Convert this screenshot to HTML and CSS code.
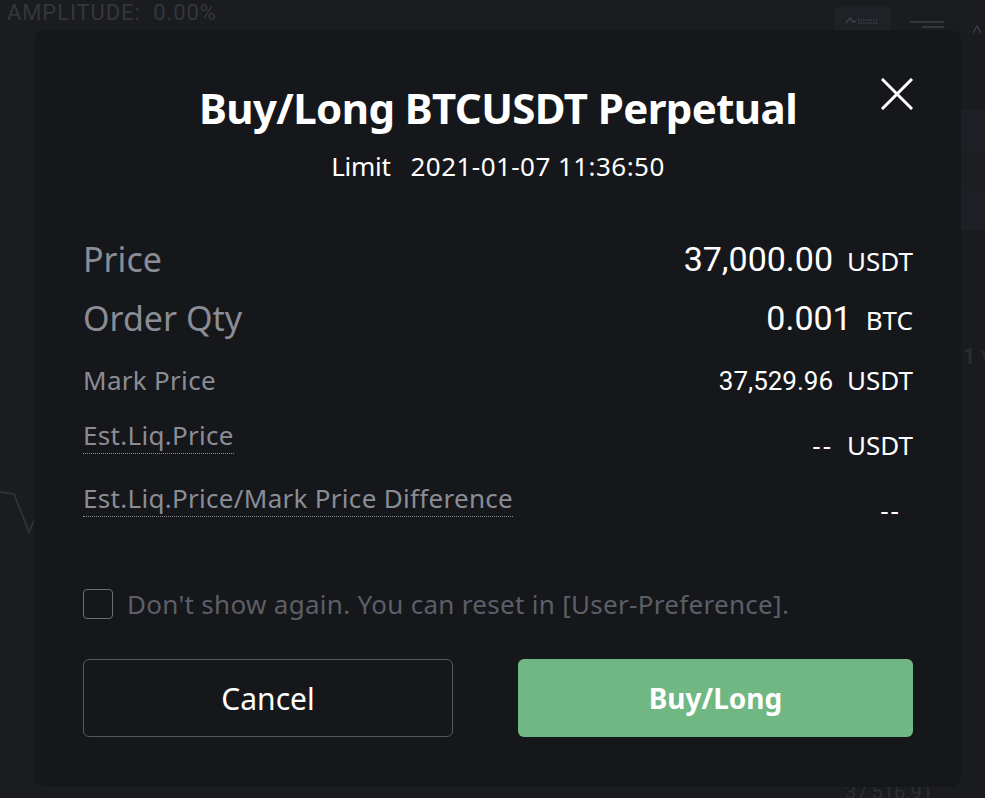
FILE: index.html
```html
<!DOCTYPE html>
<html lang="en">
<head>
<meta charset="utf-8">
<title>Buy/Long BTCUSDT Perpetual</title>
<link rel="stylesheet" href="styles.css">
</head>
<body>
<div class="app">
  <div class="amplitude">AMPLITUDE:&nbsp; 0.00%</div>
  <div class="tool-btn">
    <svg width="40" height="10" viewBox="0 0 40 10"><path d="M3 8 L7 3 L10 7 L13 6" fill="none" stroke="#3c3e44" stroke-width="1.5"/><path d="M15 5 H34 M15 8 H34" stroke="#3c3e44" stroke-width="1.5" stroke-dasharray="1.5 1"/></svg>
  </div>
  <div class="tool-lines"><span></span><span></span></div>
  <div class="tool-peak">
    <svg width="12" height="12" viewBox="0 0 12 12"><path d="M1 10 L5 3 L9 10" fill="none" stroke="#3c3e44" stroke-width="1.5"/></svg>
  </div>
  <div class="side-strip">
    <div class="band b1"></div>
    <div class="band b2"></div>
    <div class="band b3"></div>
    <div class="side-num">1 ˅</div>
  </div>
  <svg class="chart-line" width="40" height="60" viewBox="0 0 40 60"><path d="M0 8 L14 10 L29 48 L36 32" fill="none" stroke="#34363c" stroke-width="1.5"/></svg>
  <div class="bottom-text">37,516.91</div>

  <div class="modal">
    <button class="close" aria-label="Close">
      <svg width="32" height="32" viewBox="0 0 32 32"><path d="M2 2 L30 30 M30 2 L2 30" stroke="#ffffff" stroke-width="3" stroke-linecap="square"/></svg>
    </button>
    <h1 class="title">Buy/Long BTCUSDT Perpetual</h1>
    <div class="subtitle"><span class="type">Limit</span><span class="time">2021-01-07 11:36:50</span></div>

    <div class="rows">
      <div class="row big">
        <span class="label">Price</span>
        <span class="value"><span class="num">37,000.00</span><span class="unit">USDT</span></span>
      </div>
      <div class="row big r2">
        <span class="label">Order Qty</span>
        <span class="value"><span class="num">0.001</span><span class="unit">BTC</span></span>
      </div>
      <div class="row small r3">
        <span class="label">Mark Price</span>
        <span class="value"><span class="num">37,529.96</span><span class="unit">USDT</span></span>
      </div>
      <div class="row small r4">
        <span class="label dotted">Est.Liq.Price</span>
        <span class="value low"><span class="num empty">--</span><span class="unit">USDT</span></span>
      </div>
      <div class="row small r5">
        <span class="label dotted">Est.Liq.Price/Mark Price Difference</span>
        <span class="value low dash"><span class="num empty">--</span></span>
      </div>
    </div>

    <label class="check">
      <span class="box"></span>
      <span class="check-text">Don't show again. You can reset in [User-Preference].</span>
    </label>

    <div class="actions">
      <button class="btn cancel">Cancel</button>
      <button class="btn buy">Buy/Long</button>
    </div>
  </div>
</div>
</body>
</html>
```

FILE: styles.css
```css
html, body {
  margin: 0;
  padding: 0;
}
body {
  width: 985px;
  height: 798px;
  overflow: hidden;
  background: #1b1c20;
  font-family: "Noto Sans", "Open Sans", sans-serif;
}
.app {
  position: relative;
  width: 985px;
  height: 798px;
  overflow: hidden;
  background: #1b1c20;
}

/* dimmed background app */
.amplitude {
  position: absolute;
  left: 7px;
  top: -1px;
  font-family: "Roboto", sans-serif;
  font-size: 22px;
  line-height: 28px;
  color: #34363b;
  letter-spacing: 0.9px;
  white-space: nowrap;
}
.tool-btn {
  position: absolute;
  left: 835px;
  top: 7px;
  width: 56px;
  height: 26px;
  background: #202126;
  border-radius: 3px;
  display: flex;
  align-items: center;
  justify-content: center;
}
.tool-lines {
  position: absolute;
  left: 910px;
  top: 21px;
  width: 34px;
  display: flex;
  flex-direction: column;
  align-items: flex-end;
  gap: 3px;
}
.tool-lines span {
  display: block;
  height: 2px;
  background: #34363b;
  width: 34px;
}
.tool-lines span + span { width: 22px; }
.tool-peak {
  position: absolute;
  left: 972px;
  top: 18px;
}
.side-strip {
  position: absolute;
  left: 961px;
  top: 36px;
  width: 24px;
  height: 762px;
  background: #1a1b1f;
}
.band { position: absolute; left: 0; right: 0; }
.b1 { top: 74px; height: 40px; background: #1f2025; }
.b2 { top: 114px; height: 40px; background: #1d1e22; }
.b3 { top: 154px; height: 40px; background: #1f2025; }
.side-num {
  position: absolute;
  left: 2px;
  top: 308px;
  white-space: nowrap;
  font-family: "Roboto", sans-serif;
  font-weight: 700;
  font-size: 22px;
  color: #2a2c31;
}
.chart-line {
  position: absolute;
  left: 0;
  top: 484px;
}
.bottom-text {
  position: absolute;
  left: 845px;
  top: 780px;
  font-family: "Roboto", sans-serif;
  font-size: 20px;
  color: #2c2e33;
}

/* modal */
.modal {
  position: absolute;
  left: 34px;
  top: 30px;
  width: 927px;
  height: 757px;
  box-sizing: border-box;
  padding: 53px 48px 0 49px;
  background: #16171b;
  border-radius: 10px;
  display: flex;
  flex-direction: column;
}
.close {
  position: absolute;
  right: 48px;
  top: 48px;
  width: 32px;
  height: 32px;
  padding: 0;
  border: 0;
  background: none;
  display: flex;
}
.title {
  margin: 0;
  text-align: center;
  color: #ffffff;
  font-size: 42px;
  line-height: 50px;
  font-weight: 700;
  letter-spacing: -0.6px;
}
.subtitle {
  margin-top: 17px;
  display: flex;
  justify-content: center;
  gap: 20px;
  color: #ffffff;
  font-size: 26px;
  line-height: 32px;
  letter-spacing: -0.3px;
}
.subtitle .time {
  letter-spacing: 0.45px;
}

.rows {
  margin-top: 54px;
  display: flex;
  flex-direction: column;
}
.row {
  display: flex;
  justify-content: space-between;
  align-items: flex-start;
}
.label {
  color: #8a8d96;
}
.big {
  font-size: 34px;
  line-height: 46px;
}
.small {
  font-size: 26px;
  line-height: 36px;
}
.small .label {
  letter-spacing: 0.3px;
}
.r2 { margin-top: 11px; }
.r3 { margin-top: 19px; }
.r4 { margin-top: 18px; }
.r5 { margin-top: 17px; }
.dotted {
  border-bottom: 1.5px dotted #8a8d96;
}
.value {
  color: #ffffff;
  font-family: "Roboto", sans-serif;
  display: flex;
  align-items: baseline;
}
.value .unit {
  margin-left: 14px;
  font-family: "Noto Sans", sans-serif;
  font-size: 26px;
}
.value .empty {
  font-family: "Noto Sans", sans-serif;
  letter-spacing: 2px;
}
.value.low { padding-top: 10px; }
.value.dash { padding-right: 12px; padding-top: 12px; }

.check {
  margin-top: 60px;
  display: flex;
  align-items: center;
  gap: 14px;
}
.box {
  width: 28px;
  height: 28px;
  border: 1.5px solid #6c6f76;
  border-radius: 4px;
  flex: none;
}
.check-text {
  color: #5c5f68;
  font-size: 26px;
  line-height: 32px;
  letter-spacing: 0.3px;
}

.actions {
  margin-top: 39px;
  display: flex;
  gap: 65px;
}
.btn {
  height: 78px;
  border-radius: 6px;
  font-family: "Noto Sans", sans-serif;
  color: #ffffff;
  cursor: pointer;
  padding: 0;
}
.cancel {
  width: 370px;
  background: transparent;
  border: 1.5px solid #55585f;
  font-size: 30px;
}
.buy {
  flex: 1;
  background: #70b784;
  border: 0;
  font-size: 28px;
  font-weight: 700;
}
```
